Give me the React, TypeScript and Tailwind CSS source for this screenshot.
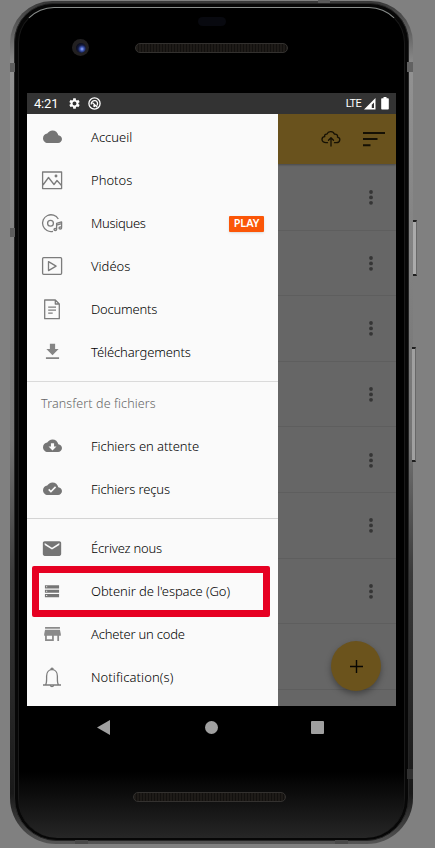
import type { ReactNode } from "react";

type Item = { label: string; icon: ReactNode; tracking: string; badge?: string };

function Solid({ d, size = 20, color = "#757575" }: { d: string; size?: number; color?: string }) {
  return (
    <svg width={size} height={size} viewBox="0 0 24 24" fill={color}>
      <path d={d} />
    </svg>
  );
}

function Line({ children }: { children: ReactNode }) {
  return (
    <svg width="22" height="22" viewBox="0 0 22 22" fill="none" stroke="#7c7c7c" strokeWidth="1.3" strokeLinejoin="round">
      {children}
    </svg>
  );
}

const cloud = "M19.35 9.04C18.67 5.59 15.64 3 12 3 9.11 3 6.6 4.64 5.35 7.04 2.34 7.36 0 9.91 0 13c0 3.31 2.69 6 6 6h13c2.76 0 5-2.24 5-5 0-2.64-2.05-4.78-4.65-4.96z";
const gear = "M19.14 12.94c.04-.3.06-.61.06-.94 0-.32-.02-.64-.07-.94l2.03-1.58a.49.49 0 0 0 .12-.61l-1.92-3.32a.488.488 0 0 0-.59-.22l-2.39.96c-.5-.38-1.03-.7-1.62-.94l-.36-2.54a.484.484 0 0 0-.48-.41h-3.84c-.24 0-.43.17-.47.41l-.36 2.54c-.59.24-1.13.57-1.62.94l-2.39-.96c-.22-.08-.47 0-.59.22L2.74 8.87c-.12.21-.08.47.12.61l2.03 1.58c-.05.3-.09.63-.09.94s.02.64.07.94l-2.03 1.58a.49.49 0 0 0-.12.61l1.92 3.32c.12.22.37.29.59.22l2.39-.96c.5.38 1.03.7 1.62.94l.36 2.54c.05.24.24.41.48.41h3.84c.24 0 .44-.17.47-.41l.36-2.54c.59-.24 1.13-.56 1.62-.94l2.39.96c.22.08.47 0 .59-.22l1.92-3.32c.12-.22.07-.47-.12-.61l-2.01-1.58zM12 15.6c-1.98 0-3.6-1.62-3.6-3.6s1.62-3.6 3.6-3.6 3.6 1.62 3.6 3.6-1.62 3.6-3.6 3.6z";

const library: Item[] = [
  { label: "Accueil", tracking: "tracking-[0px]", icon: <Solid d={cloud} size={19} /> },
  {
    label: "Photos", tracking: "tracking-[0px]",
    icon: (
      <Line>
        <path d="M1.600 2h19v16.600h-19zM2 15l5.500-7.500 5.500 7 3-4 4.500 5" />
        <circle cx="15" cy="6" r=".8" fill="#828282" />
      </Line>
    ),
  },
  {
    label: "Musiques", tracking: "tracking-[-0.3px]", badge: "PLAY",
    icon: (
      <Line>
        <path d="M17.300 6A8.400 8.400 0 1 0 12 18.300" />
        <circle cx="9.500" cy="10.200" r="2.900" />
        <path d="M15.600 16.200V10.300l5-1.400V14.600M15.600 12.100l5-1.400" />
        <ellipse cx="14.300" cy="16.400" rx="1.300" ry="1.100" />
        <ellipse cx="19.300" cy="14.900" rx="1.300" ry="1.100" />
      </Line>
    ),
  },
  {
    label: "Vidéos", tracking: "tracking-[0px]",
    icon: (
      <Line>
        <rect x="1.600" y="1.700" width="19" height="16.600" rx="1" />
        <path d="M7.500 5.600v9l7.600-4.500z" />
      </Line>
    ),
  },
  {
    label: "Documents", tracking: "tracking-[-0.2px]",
    icon: (
      <Line>
        <path d="M3.700 1h10.600l4 4v14.700H3.700zM14.300 1v4h4M7.200 8.200h7.800M7.200 11.200h7.800M7.200 14.200h4.500" />
      </Line>
    ),
  },
  { label: "Téléchargements", tracking: "tracking-[-0.1px]", icon: <Solid d="M19 8h-4V2H9v6H5l7 7 7-7zM4.500 17.300v2.200h15v-2.200z" size={21} color="#858585" /> },
];

const transfers: Item[] = [
  { label: "Fichiers en attente", tracking: "tracking-[-0.05px]", icon: <Solid d={cloud + "M17 12l-5 5-5-5h3V8h4v4h3z"} size={19} /> },
  { label: "Fichiers reçus", tracking: "tracking-[-0.1px]", icon: <Solid d={cloud + "M10 16l-3.500-3.500 1.410-1.410L10 13.170 15.180 8l1.410 1.410L10 16z"} size={19} /> },
];

const account: Item[] = [
  { label: "Écrivez nous", tracking: "tracking-[-0.2px]", icon: <Solid d="M20 3.500H4c-1.100 0-1.990.9-1.990 2L2 17.500c0 1.100.9 2 2 2h16c1.100 0 2-.9 2-2V5.500c0-1.100-.9-2-2-2zm0 4l-8 5-8-5v-2l8 5 8-5v2z" size={22} /> },
  { label: "Obtenir de l'espace (Go)", tracking: "tracking-[-0.08px]", icon: <Solid d="M3.500 4h17v3.800h-17zM3.500 9.200h17v3.800h-17zM3.500 14.400h17v3.800h-17zM5 5.200v1.200h1.200v-1.200zM5 10.400v1.200h1.200v-1.200zM5 15.600v1.200h1.200v-1.200z" size={20} /> },
  { label: "Acheter un code", tracking: "tracking-[-0.2px]", icon: <Solid d="M20.500 3.500h-17v2h17zm1 10v-2l-1-5h-17l-1 5v2h1v6h10v-6h4v6h2v-6h2zm-10 4h-6v-4h6v4z" size={21} color="#8a8a8a" /> },
  {
    label: "Notification(s)", tracking: "tracking-[0.1px]",
    icon: (
      <Line>
        <path d="M2 18h18M4.500 17.700c1.400-1.600 1.100-4 1.100-8.500C5.600 5.200 8 2.700 11 2.700s5.400 2.500 5.400 6.500c0 4.500-.3 6.900 1.100 8.500M9.800 2.700c0-2 2.400-2 2.400 0M9.300 18.300c.5 1.800 2.900 1.800 3.400 0" />
      </Line>
    ),
  },
];

function MenuRow({ item }: { item: Item }) {
  return (
    <div className="flex h-[43px] items-center pl-[14px] pr-[14px]">
      <span className="flex w-[22px] shrink-0 justify-center">{item.icon}</span>
      <span className={"ml-[28px] text-[13px] leading-none font-light whitespace-nowrap text-black " + item.tracking}>{item.label}</span>
      {item.badge && (
        <span className="ml-auto flex h-[16px] w-[35px] items-center justify-center rounded-[1px] bg-[#fb5607] text-[11px] font-semibold tracking-[-0.1px] text-white shadow-sm">
          {item.badge}
        </span>
      )}
    </div>
  );
}

function Speaker({ className }: { className: string }) {
  return (
    <div className={"h-[10px] rounded-full border border-[#33312f] bg-[repeating-linear-gradient(90deg,#1e1b18_0px,#1e1b18_2px,#12100e_2px,#12100e_3px)] " + className} />
  );
}

function StatusBar() {
  return (
    <div className="flex h-[21px] items-center bg-[#333] pl-[7px] pr-[7px] font-['Roboto',sans-serif] text-white">
      <span className="w-[25px] text-[13px] leading-none tracking-[-0.2px]">4:21</span>
      <span className="ml-[9px]"><Solid d={gear} size={13} color="#fff" /></span>
      <svg className="ml-[7px]" width="13" height="13" viewBox="0 0 13 13" fill="none" stroke="#fff">
        <circle cx="6.500" cy="6.500" r="5.600" strokeWidth="1.300" />
        <path d="M3.200 7.500C3 4.800 5 3.200 7.300 3.700 9.600 4.200 10.200 7 8.800 8.600M4.500 5.800l4.800 4.500M5.200 8.600l1.800 1" strokeWidth="1.300" />
      </svg>
      <span className="ml-auto text-[11px] leading-none tracking-[-0.7px]">LTE</span>
      <svg className="ml-[3px]" width="12" height="12" viewBox="0 0 12 12">
        <path d="M11.500 0v11.500H0z" fill="#fff" />
        <path d="M10 4.500v5.600H7.800V6.800z" fill="#333" />
      </svg>
      <svg className="ml-[5px]" width="8" height="13" viewBox="0 0 8 13" fill="#fff">
        <path d="M2.500 0h3v1.200H7c.5 0 .8.3.8.8v9.700c0 .5-.3.8-.8.8H1c-.5 0-.8-.3-.8-.8V2c0-.5.3-.8.8-.8h1.500z" />
      </svg>
    </div>
  );
}

function Drawer() {
  return (
    <div className="h-full w-[251px] shrink-0 bg-[#fafafa] pt-[2px] shadow-[2px_0_4px_rgba(0,0,0,0.25)]">
      {library.map((i) => <MenuRow key={i.label} item={i} />)}
      <div className="mt-[7px] h-px bg-[#dadada]" />
      <div className="flex h-[43px] items-center pt-[2px] pl-[14px] text-[12.500px] leading-none font-light tracking-[0.12px] text-[#666]">Transfert de fichiers</div>
      {transfers.map((i) => <MenuRow key={i.label} item={i} />)}
      <div className="mt-[7px] mb-[8px] h-px bg-[#d4d4d4]" />
      {account.map((i) => <MenuRow key={i.label} item={i} />)}
    </div>
  );
}

function FileList() {
  return (
    <div className="min-w-0 flex-1 overflow-hidden bg-[#666]">
      <div className="flex h-[50px] items-center bg-[#69521d] pl-[43px] shadow-[0_1px_2px_rgba(0,0,0,0.3)]">
        <svg width="20" height="18" viewBox="0 0 20 18" fill="none" stroke="#151004" strokeWidth="1.300" strokeLinecap="round" strokeLinejoin="round">
          <path d="M6.500 12.700H5C2.700 12.700 1 11.500 1 9.500 1 7.700 2.300 6.800 3.700 6.700 3.300 4.800 4.500 3.800 6 4.100 7 1.300 12 .4 13.500 4.200c2-.4 3.500 1 3 2.900 1.500.3 2.500 1.300 2.300 2.800-.2 1.700-1.500 2.800-3.300 2.800h-2M10 16V8M7.500 10.200L10 7.800l2.500 2.400" />
        </svg>
        <svg className="ml-[22px]" width="22" height="15" viewBox="0 0 22 15" fill="#151004">
          <path d="M0 0h22v2H0zM0 6.100h14.500v2H0zM0 12.200h7.500v2H0z" />
        </svg>
      </div>
      <div className="pt-[1px]">
        {[0, 1, 2, 3, 4, 5, 6, 7].map((n) => (
          <div key={n} className="flex h-[65.600px] items-center justify-end border-b border-[#5e5e5e] pr-[22px]">
            <svg width="6" height="16" viewBox="0 0 6 16" fill="#353535">
              <circle cx="3" cy="3" r="1.900" /><circle cx="3" cy="8.400" r="1.900" /><circle cx="3" cy="13.800" r="1.900" />
            </svg>
          </div>
        ))}
      </div>
    </div>
  );
}

export default function App() {
  return (
    <div className="relative h-[848px] w-[435px] overflow-hidden bg-[#808080] pt-px pl-[10px] font-['Noto_Sans','Open_Sans',sans-serif]">
      <div className="h-[843px] w-[403px] rounded-t-[42px] rounded-b-[46px] bg-[linear-gradient(180deg,#383838_0%,#929292_8%,#858585_25%,#747474_52%,#3a3a3a_68%,#191919_94%,#555_100%)] px-[4px] pt-[2px] pb-[3px]">
        <div className="h-full rounded-t-[39px] rounded-b-[43px] border border-[#252525] bg-[#070707] px-[3px] pt-[3px] pb-[2px]">
          <div className="flex h-full flex-col items-center rounded-t-[36px] rounded-b-[39px] border-x border-x-[#191919] border-t border-t-[#8b8f8d] bg-[linear-gradient(180deg,#000_0%,#000_92%,#0e0e0e_95%,#262626_100%)]">
            <div className="flex h-[85px] w-full shrink-0 flex-col items-center">
              <div className="mt-[9px] h-[9px] w-[28px] rounded-full bg-[#08090f]" />
              <div className="mt-[13px] flex w-full items-center">
                <div className="ml-[53px] flex h-[17px] w-[17px] items-center justify-center rounded-full bg-[#222021]">
                  <div className="h-[10px] w-[10px] rounded-full bg-[radial-gradient(circle_at_60%_60%,#9eb4ff_0px,#3b54b0_2px,#14193c_4px,#0b0d1c_6px)]" />
                </div>
                <Speaker className="ml-[46px] w-[153px]" />
              </div>
            </div>
            <div className="relative h-[613px] w-[369px] shrink-0">
              <StatusBar />
              <div className="flex h-[592px] overflow-hidden">
                <Drawer />
                <FileList />
              </div>
              <div className="absolute top-[548px] left-[304px] flex h-[50px] w-[50px] items-center justify-center rounded-full bg-[#6b531c] shadow-[0_3px_6px_rgba(0,0,0,0.35)]">
                <svg width="13" height="13" viewBox="0 0 13 13" stroke="#080703" strokeWidth="1.400"><path d="M0 6.500h13M6.500 0v13" /></svg>
              </div>
              <div className="absolute top-[473px] left-[5px] h-[51px] w-[238px] rounded-[2px] border-[7px] border-[#e60022]" />
            </div>
            <div className="flex h-[43px] w-[369px] shrink-0 items-center">
              <svg className="ml-[70px]" width="13" height="15" viewBox="0 0 13 15" fill="#a0a0a0"><path d="M13 0v15L0 7.500z" /></svg>
              <div className="ml-[95px] h-[13px] w-[13px] rounded-full bg-[#a0a0a0]" />
              <div className="ml-[93px] h-[13px] w-[13px] rounded-[1px] bg-[#a0a0a0]" />
            </div>
            <Speaker className="mt-[43px] mr-[5px] w-[153px]" />
          </div>
        </div>
      </div>
      <div className="absolute top-[63px] left-[10px] h-[9px] w-[5px] bg-[#5d5d5d]" />
      <div className="absolute top-[228px] left-[10px] h-[9px] w-[5px] bg-[#5d5d5d]" />
      <div className="absolute top-[62px] left-[407px] h-[10px] w-[6px] bg-[#626262]" />
      <div className="absolute top-[769px] left-[407px] h-[10px] w-[6px] bg-[#303030]" />
      <div className="absolute top-[220px] left-[413px] h-[56px] w-[4px] border-y-2 border-r border-y-[#202020] border-r-[#686868] bg-[#ababab]" />
      <div className="absolute top-[347px] left-[412px] h-[115px] w-[4px] border-y-2 border-r border-y-[#202020] border-r-[#686868] bg-[#a0a0a0]" />
      <div className="absolute top-[840px] left-[75px] h-[4px] w-[13px] bg-[#484848]" />
      <div className="absolute top-[840px] left-[335px] h-[4px] w-[13px] bg-[#484848]" />
      <div className="absolute top-[0px] left-[318px] h-[3px] w-[12px] bg-[#595959]" />
    </div>
  );
}
